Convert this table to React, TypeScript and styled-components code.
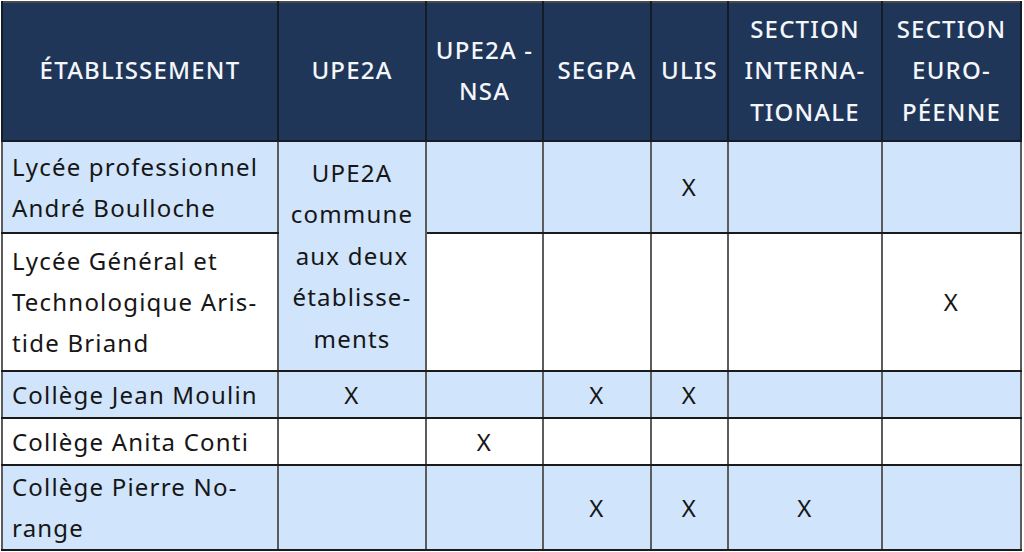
import React from "react";
import styled, { createGlobalStyle } from "styled-components";

const Global = createGlobalStyle`
  html, body { margin: 0; padding: 0; background: #ffffff; }
  body { font-family: "Noto Sans", "DejaVu Sans", sans-serif; }
`;

const Page = styled.div`
  padding: 1px 0 0 1px;
`;

const Table = styled.table`
  border-collapse: collapse;
  table-layout: fixed;
  width: 1019px;
  font-size: 24px;
  line-height: 41px;
  letter-spacing: 1.2px;
  color: #161616;
  border: 2px solid #4a4a4a;
`;

const HeadRow = styled.tr`
  height: 139px;
  background: #1f3659;
`;

const Th = styled.th`
  color: #f4f6fa;
  font-weight: 500;
  text-transform: uppercase;
  letter-spacing: 1.2px;
  text-align: center;
  vertical-align: middle;
  padding: 0 2px 3px;
  line-height: 41.5px;
  border-left: 2px solid #141c28;
  border-right: 2px solid #141c28;
  border-bottom: 2px solid #141c28;
`;

const Row = styled.tr<{ $h: number; $alt?: boolean }>`
  height: ${(p) => p.$h}px;
  background: ${(p) => (p.$alt ? "#ffffff" : "#d0e4fb")};
`;

const Td = styled.td<{ $left?: boolean }>`
  text-align: ${(p) => (p.$left ? "left" : "center")};
  vertical-align: middle;
  padding: 0 2px 1px;
  padding-left: ${(p) => (p.$left ? "9px" : "2px")};
  white-space: nowrap;
  border-left: 2px solid #5c5c5c;
  border-right: 2px solid #5c5c5c;
  border-top: 2px solid #1a1a1a;
  border-bottom: 2px solid #1a1a1a;
`;

const Shared = styled(Td)`
  background: #d0e4fb;
  line-height: 41.5px;
`;

const cols = [276, 148, 117, 108, 77, 154, 139];

export default function App() {
  return (
    <>
      <Global />
      <Page>
        <Table>
          <colgroup>
            {cols.map((w, i) => (
              <col key={i} style={{ width: w }} />
            ))}
          </colgroup>
          <thead>
            <HeadRow>
              <Th>Établissement</Th>
              <Th>UPE2A</Th>
              <Th>
                UPE2A -<br />
                NSA
              </Th>
              <Th>SEGPA</Th>
              <Th>ULIS</Th>
              <Th>
                Section
                <br />
                Interna-
                <br />
                tionale
              </Th>
              <Th>
                Section
                <br />
                Euro-
                <br />
                péenne
              </Th>
            </HeadRow>
          </thead>
          <tbody>
            <Row $h={92}>
              <Td $left>
                Lycée professionnel
                <br />
                André Boulloche
              </Td>
              <Shared rowSpan={2}>
                UPE2A
                <br />
                commune
                <br />
                aux deux
                <br />
                établisse-
                <br />
                ments
              </Shared>
              <Td />
              <Td />
              <Td>X</Td>
              <Td />
              <Td />
            </Row>
            <Row $h={138} $alt>
              <Td $left>
                Lycée Général et
                <br />
                Technologique Aris-
                <br />
                tide Briand
              </Td>
              <Td />
              <Td />
              <Td />
              <Td />
              <Td>X</Td>
            </Row>
            <Row $h={47}>
              <Td $left>Collège Jean Moulin</Td>
              <Td>X</Td>
              <Td />
              <Td>X</Td>
              <Td>X</Td>
              <Td />
              <Td />
            </Row>
            <Row $h={47} $alt>
              <Td $left>Collège Anita Conti</Td>
              <Td />
              <Td>X</Td>
              <Td />
              <Td />
              <Td />
              <Td />
            </Row>
            <Row $h={84}>
              <Td $left>
                Collège Pierre No-
                <br />
                range
              </Td>
              <Td />
              <Td />
              <Td>X</Td>
              <Td>X</Td>
              <Td>X</Td>
              <Td />
            </Row>
          </tbody>
        </Table>
      </Page>
    </>
  );
}
